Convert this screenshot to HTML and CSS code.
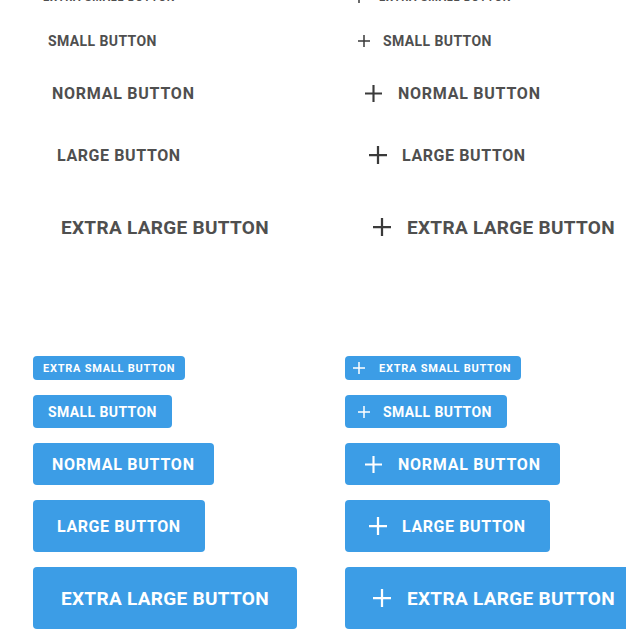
FILE: index.html
```html
<!DOCTYPE html>
<html lang="en">
<head>
  <meta charset="UTF-8">
  <meta name="viewport" content="width=device-width, initial-scale=1.0">
  <title>Buttons</title>
  <link rel="stylesheet" href="styles.css">
</head>
<body>
  <div class="page">
    <!-- flat buttons -->
    <section class="section flat">
      <div class="column">
        <button class="btn xs">Extra small button</button>
        <button class="btn sm">Small button</button>
        <button class="btn md">Normal button</button>
        <button class="btn lg">Large button</button>
        <button class="btn xl">Extra large button</button>
      </div>
      <div class="column">
        <button class="btn xs"><svg class="plus" viewBox="0 0 16 16"><path d="M8 0v16M0 8h16"/></svg>Extra small button</button>
        <button class="btn sm"><svg class="plus" viewBox="0 0 16 16"><path d="M8 0v16M0 8h16"/></svg>Small button</button>
        <button class="btn md"><svg class="plus" viewBox="0 0 16 16"><path d="M8 0v16M0 8h16"/></svg>Normal button</button>
        <button class="btn lg"><svg class="plus" viewBox="0 0 16 16"><path d="M8 0v16M0 8h16"/></svg>Large button</button>
        <button class="btn xl"><svg class="plus" viewBox="0 0 16 16"><path d="M8 0v16M0 8h16"/></svg>Extra large button</button>
      </div>
    </section>

    <!-- raised buttons -->
    <section class="section raised">
      <div class="column">
        <button class="btn xs">Extra small button</button>
        <button class="btn sm">Small button</button>
        <button class="btn md">Normal button</button>
        <button class="btn lg">Large button</button>
        <button class="btn xl">Extra large button</button>
      </div>
      <div class="column">
        <button class="btn xs"><svg class="plus" viewBox="0 0 16 16"><path d="M8 0v16M0 8h16"/></svg>Extra small button</button>
        <button class="btn sm"><svg class="plus" viewBox="0 0 16 16"><path d="M8 0v16M0 8h16"/></svg>Small button</button>
        <button class="btn md"><svg class="plus" viewBox="0 0 16 16"><path d="M8 0v16M0 8h16"/></svg>Normal button</button>
        <button class="btn lg"><svg class="plus" viewBox="0 0 16 16"><path d="M8 0v16M0 8h16"/></svg>Large button</button>
        <button class="btn xl"><svg class="plus" viewBox="0 0 16 16"><path d="M8 0v16M0 8h16"/></svg>Extra large button</button>
      </div>
    </section>
  </div>
</body>
</html>
```

FILE: styles.css
```css
body { margin: 0; background: #fff; font-family: Roboto, "Liberation Sans", sans-serif; overflow: hidden; }
.page { margin-top: -15px; padding-left: 33px; }
.section { display: grid; grid-template-columns: 312px 281px; }
.section.raised { margin-top: 98px; }
.column { display: flex; flex-direction: column; align-items: flex-start; gap: 15px; overflow: hidden; }

.btn { display: flex; align-items: center; border: none; border-radius: 4px; font-family: inherit; font-weight: 700; text-transform: uppercase; white-space: nowrap; flex-shrink: 0; cursor: pointer; }
.flat .btn { background: transparent; color: #4f4f4f; }
.raised .btn { background: #3c9de6; color: #fff; }

.plus { fill: none; stroke: currentColor; stroke-width: 2; flex-shrink: 0; }
.flat .plus { color: #3a3a3a; }

.btn.xs { height: 24px; padding: 0 10px; font-size: 11px; letter-spacing: 0.75px; }
.btn.sm { height: 33px; padding: 0 15px; font-size: 14px; letter-spacing: 0.4px; }
.btn.md { height: 42px; padding: 0 19px; font-size: 16px; letter-spacing: 0.75px; }
.btn.lg { height: 52px; padding: 0 24px; font-size: 16px; letter-spacing: 0.6px; }
.btn.xl { height: 62px; padding: 0 28px; font-size: 19px; letter-spacing: 0.3px; }

.btn.xs .plus { width: 12px; height: 12px; margin: 0 14px 0 -2px; }
.btn.sm .plus { width: 12px; height: 12px; margin: 0 13px 0 -2px; }
.btn.md .plus { width: 17px; height: 17px; margin: 0 16px 0 1px; }
.btn.lg .plus { width: 18px; height: 18px; margin: 0 15px 0 0; }
.btn.xl .plus { width: 18px; height: 18px; margin: 0 16px 0 0; }
```
